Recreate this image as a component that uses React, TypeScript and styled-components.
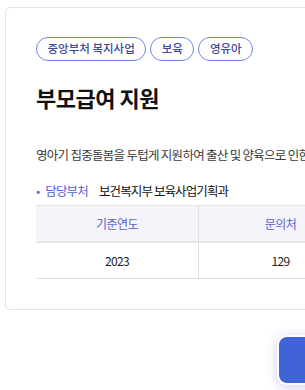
import styled, { createGlobalStyle } from "styled-components";

const GlobalStyle = createGlobalStyle`
  html, body {
    margin: 0;
    padding: 0;
    background: #ffffff;
    overflow: hidden;
  }
  body {
    font-family: "Noto Sans CJK KR", "Noto Sans", sans-serif;
    color: #111111;
  }
`;

const Page = styled.div`
  width: 305px;
  height: 390px;
  padding: 7px 0 0 5px;
  box-sizing: border-box;
  overflow: hidden;
`;

const Card = styled.section`
  width: 460px;
  box-sizing: border-box;
  padding: 29px 30px 30px 30px;
  border: 1px solid #e2e2e2;
  border-radius: 5px;
  background: #ffffff;
`;

const TagRow = styled.div`
  display: flex;
  gap: 4px;
`;

const Tag = styled.span`
  display: inline-flex;
  align-items: center;
  height: 24px;
  box-sizing: border-box;
  padding: 0 10.5px;
  border: 1.5px solid #6f86e6;
  border-radius: 12px;
  font-size: 11.5px;
  font-weight: 500;
  color: #3f4a9a;
  line-height: 1;
`;

const Title = styled.h1`
  margin: 21px 0 0 0;
  font-size: 22px;
  line-height: 30px;
  font-weight: 700;
  letter-spacing: -0.5px;
  color: #111111;
`;

const Description = styled.p`
  margin: 33px 0 0 0;
  font-size: 12.5px;
  line-height: 20px;
  letter-spacing: -0.72px;
  color: #3a3a3a;
  white-space: nowrap;
`;

const InfoRow = styled.div`
  display: flex;
  align-items: center;
  margin-top: 15px;
  height: 20px;
  font-size: 12.5px;
  letter-spacing: -0.9px;
  white-space: nowrap;
`;

const InfoLabel = styled.span`
  color: #5560d4;
  width: 63px;
  &::before {
    content: "•";
    margin-right: 6px;
    color: #5a73e0;
  }
`;

const InfoValue = styled.span`
  color: #111111;
`;

const Table = styled.div`
  margin-top: 5px;
  display: grid;
  grid-template-columns: 163px 163px;
  border-top: 1px solid #e4e4e8;
`;

const Cell = styled.div<{ $head?: boolean; $last?: boolean }>`
  display: flex;
  align-items: center;
  justify-content: center;
  height: 35px;
  font-size: 12px;
  letter-spacing: -0.6px;
  background: ${(p) => (p.$head ? "#f4f5fa" : "#ffffff")};
  color: ${(p) => (p.$head ? "#5a5fcf" : "#1a1a1a")};
  border-bottom: ${(p) => (p.$head ? "2px solid #e8e8eb" : "1px solid #e0e0e0")};
  border-right: ${(p) => (p.$last ? "none" : "1px solid #e0e0e0")};
`;

const FloatingButton = styled.button`
  position: fixed;
  top: 335px;
  left: 277px;
  width: 70px;
  height: 50px;
  border: 2px solid #ffffff;
  border-radius: 10px;
  background: #4163d8;
  box-shadow: 0 2px 12px rgba(100, 90, 210, 0.3);
  cursor: pointer;
`;

const tags = ["중앙부처 복지사업", "보육", "영유아"];

const App = () => {
	return (
		<>
			<GlobalStyle />
			<Page>
				<Card>
					<TagRow>
						{tags.map((tag) => (
							<Tag key={tag}>{tag}</Tag>
						))}
					</TagRow>
					<Title>부모급여 지원</Title>
					<Description>
						영아기 집중돌봄을 두텁게 지원하여 출산 및 양육으로 인한 경제적 부담을 경감
					</Description>
					<InfoRow>
						<InfoLabel>담당부처</InfoLabel>
						<InfoValue>보건복지부 보육사업기획과</InfoValue>
					</InfoRow>
					<Table>
						<Cell $head>기준연도</Cell>
						<Cell $head $last>
							문의처
						</Cell>
						<Cell>2023</Cell>
						<Cell $last>129</Cell>
					</Table>
				</Card>
			</Page>
			<FloatingButton aria-label="menu" />
		</>
	);
};

export default App;
